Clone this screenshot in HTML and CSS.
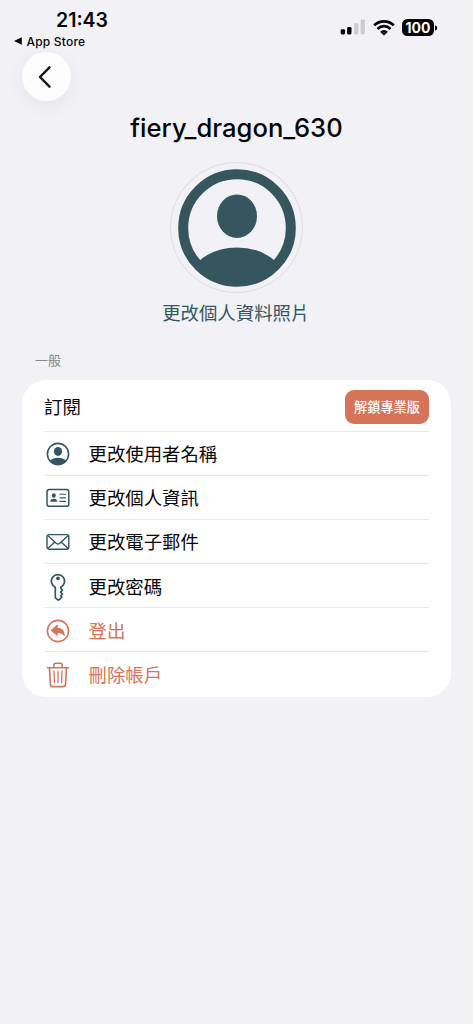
FILE: index.html
```html
<!DOCTYPE html>
<html lang="zh-Hant">
<head>
<meta charset="utf-8">
<meta name="viewport" content="width=device-width, initial-scale=1">
<title>fiery_dragon_630</title>
<link rel="stylesheet" href="styles.css">
</head>
<body>
<div class="screen">
  <header class="status">
    <div class="status-left">
      <span class="time">21:43</span>
      <span class="return"><svg width="8" height="8" viewBox="0 0 8 8"><path d="M0 4 7.8 .3V7.7Z" fill="#060609"/></svg><span>App Store</span></span>
    </div>
    <div class="status-right">
      <svg width="26" height="17" viewBox="0 0 26 17"><rect x=".7" y="10.2" width="4.4" height="5.2" rx="1.3" fill="#060609"/><rect x="7.1" y="7.9" width="4.4" height="7.5" rx="1.3" fill="#060609"/><rect x="14" y="4.3" width="4.4" height="11.1" rx="1.3" fill="#cbcbd0"/><rect x="20.6" y=".4" width="4.4" height="15" rx="1.3" fill="#cbcbd0"/></svg>
      <svg class="wifi" width="22" height="16" viewBox="0 0 22 16"><g fill="none" stroke="#060609" stroke-width="2.7"><path d="M1.2 5.3Q5.3 1.4 11 1.4T20.8 5.3"/><path d="M4.5 8.9Q7.4 6.2 11 6.2T17.5 8.9"/></g><path d="M7 11.7Q11 8.5 15 11.7L11.7 14.9Q11 15.5 10.3 14.9Z" fill="#060609"/></svg>
      <span class="battery">100</span><svg class="cap" width="3" height="6" viewBox="0 0 3 6"><path d="M0 .3Q2.3 1 2.3 3T0 5.7Z" fill="#060609"/></svg>
    </div>
  </header>
  <nav class="nav"><button class="back" aria-label="返回"><svg width="14" height="24" viewBox="0 0 14 24"><path d="M11.5 2.3 2 12 11.5 21.7" fill="none" stroke="#17171a" stroke-width="2.5" stroke-linecap="round" stroke-linejoin="round"/></svg></button></nav>
  <section class="profile">
    <h1 class="username">fiery_dragon_630</h1>
    <div class="avatar"><svg width="118" height="118" viewBox="0 0 118 118"><circle cx="59" cy="59" r="53.8" fill="none" stroke="#35565e" stroke-width="10"/><ellipse cx="59" cy="47.2" rx="20" ry="21.8" fill="#35565e"/><path d="M20 93Q35 78.5 59 78.5T98 93L94 101Q80 117 59 117T24 101Z" fill="#35565e"/></svg></div>
    <a class="change-photo">更改個人資料照片</a>
  </section>
  <h2 class="section-title">一般</h2>
  <main class="card">
    <div class="row subscription"><span>訂閱</span><button class="unlock">解鎖專業版</button></div>
    <div class="row"><span class="icon"><svg width="24" height="24" viewBox="0 0 24 24"><circle cx="12" cy="12" r="10.6" fill="none" stroke="#35565e" stroke-width="1.6"/><ellipse cx="12" cy="9.4" rx="4.1" ry="4.5" fill="#35565e"/><path d="M3.7 18.7Q6.8 15.8 12 15.8T20.3 18.7Q17 22.6 12 22.6T3.7 18.7Z" fill="#35565e"/></svg></span><span>更改使用者名稱</span></div>
    <div class="row"><span class="icon"><svg width="24" height="20" viewBox="0 0 24 20"><rect x="1" y="1.5" width="21.8" height="16.8" rx="2.4" fill="none" stroke="#35565e" stroke-width="1.5"/><ellipse cx="7.8" cy="7.5" rx="2" ry="2.3" fill="#35565e"/><path d="M4.2 13.8Q4.5 10.8 7.8 10.8T11.4 13.8Z" fill="#35565e"/><path d="M14 6.3H19.5M14 9.9H19.5M14 13.4H19.5" stroke="#35565e" stroke-width="1.1" stroke-linecap="round"/></svg></span><span>更改個人資訊</span></div>
    <div class="row"><span class="icon"><svg width="24" height="18" viewBox="0 0 24 18"><g fill="none" stroke="#35565e" stroke-width="1.4" stroke-linejoin="round"><rect x="1" y="1.6" width="21.8" height="14.6" rx="2"/><path d="M1.8 2.4 10.2 10.3Q12 11.8 13.8 10.3L22.1 2.4M1.8 15.5 8.8 9M22.1 15.5 15.1 9"/></g></svg></span><span>更改電子郵件</span></div>
    <div class="row"><span class="icon"><svg width="24" height="28" viewBox="0 0 24 28"><path d="M9.3 14.2A6.6 6.6 0 1 1 14.8 14.1L14.9 15.4 16.5 17.2 14.6 19.1 16.5 21 14.8 22.8 15.8 24.2 13 26.8Q12.2 27.2 11.5 26.7L9.3 24.7Z" fill="none" stroke="#35565e" stroke-width="1.7" stroke-linejoin="round"/><circle cx="12" cy="5.3" r="1.9" fill="#35565e"/></svg></span><span>更改密碼</span></div>
    <div class="row danger"><span class="icon"><svg width="24" height="24" viewBox="0 0 24 24"><circle cx="12" cy="12" r="10.6" fill="none" stroke="#d57459" stroke-width="1.6"/><path d="M5 11 10.9 5.8Q11.7 5.3 11.7 6.3V8.7C15.9 8.7 18.7 11.5 18.7 16.2Q18.6 17.5 17.8 16.5Q16 13.9 11.7 13.9V16.1Q11.7 17.1 10.9 16.5L5 11.8Q4.6 11.4 5 11Z" fill="#d57459"/></svg></span><span>登出</span></div>
    <div class="row danger"><span class="icon"><svg width="24" height="26" viewBox="0 0 24 26"><g fill="none" stroke="#d57459" stroke-width="1.6" stroke-linecap="round" stroke-linejoin="round"><path d="M1.5 5.7H22.4M7.8 5.7V3Q7.8 1.2 9.6 1.2H14.4Q16.2 1.2 16.2 3V5.7M3.4 5.7 4.4 22.4Q4.5 24.6 6.7 24.6H17.2Q19.4 24.6 19.5 22.4L20.5 5.7"/><path d="M8 9.2 8.4 20.8M12 9.2V20.8M16 9.2 15.6 20.8" stroke-width="1.3"/></g></svg></span><span>刪除帳戶</span></div>
  </main>
</div>
</body>
</html>
```
FILE: styles.css
```css
* { box-sizing: border-box; }
body { margin: 0; background: #f1f1f6; color: #060609; font-family: Inter, "Noto Sans CJK TC", sans-serif; }
svg { display: block; flex-shrink: 0; }
button { border: 0; padding: 0; font-family: inherit; }
.screen { width: 473px; height: 1024px; }
.status { height: 52px; display: flex; justify-content: space-between; padding: 9px 35px 0 14px; }
.status-left { display: flex; flex-direction: column; }
.time { padding-left: 42px; font-size: 19.5px; line-height: 22px; font-weight: 600; }
.return { display: flex; align-items: center; gap: 4.5px; height: 20px; font-size: 12px; font-weight: 500; letter-spacing: .2px; white-space: nowrap; }
.status-right { display: flex; align-items: center; height: 37px; }
.wifi { margin-left: 7px; }
.battery { margin-left: 7px; width: 32px; height: 17px; border-radius: 5.5px; background: #060609; color: #fff; font-size: 14px; line-height: 17px; font-weight: 700; text-align: center; }
.cap { margin-left: 1px; }
.nav { height: 60px; padding-left: 22px; }
.back { width: 49px; height: 49px; border-radius: 50%; background: #fdfdfe; display: grid; place-items: center; padding-right: 4px; box-shadow: 0 5px 20px rgba(0,0,0,.055); }
.profile { display: flex; flex-direction: column; align-items: center; }
.username { margin: 0; height: 32px; font-size: 25.6px; line-height: 32px; font-weight: 500; }
.avatar { width: 133px; height: 131px; margin-top: 18px; border: 1px solid #dedee2; border-radius: 50%; display: grid; place-items: center; }
.avatar svg { width: 118px; height: 118px; }
.change-photo { margin-top: 6px; height: 28px; padding-right: 1.5px; font-size: 18.4px; line-height: 28px; color: #35565e; }
.section-title { margin: 23px 0 0 35px; height: 20px; font-size: 13px; line-height: 20px; font-weight: 400; color: #85858a; }
.card { margin: 10px 22px 0; height: 317px; padding: 0 22px; border-radius: 24px; background: #fff; }
.row { height: 44.2px; display: flex; align-items: center; padding-top: 2px; border-bottom: 1.3px solid #e9e9ed; font-size: 18.4px; line-height: 28px; }
.row:last-child { border: 0; padding-top: 1px; }
.subscription { height: 51.5px; justify-content: space-between; padding-top: 3px; }
.icon { width: 44.5px; padding-left: 1.5px; }
.unlock { width: 84px; height: 34px; border-radius: 9px; background: #d57459; color: #fff; font-size: 13.2px; font-weight: 500; line-height: 20px; }
.danger { color: #d57459; }
```
